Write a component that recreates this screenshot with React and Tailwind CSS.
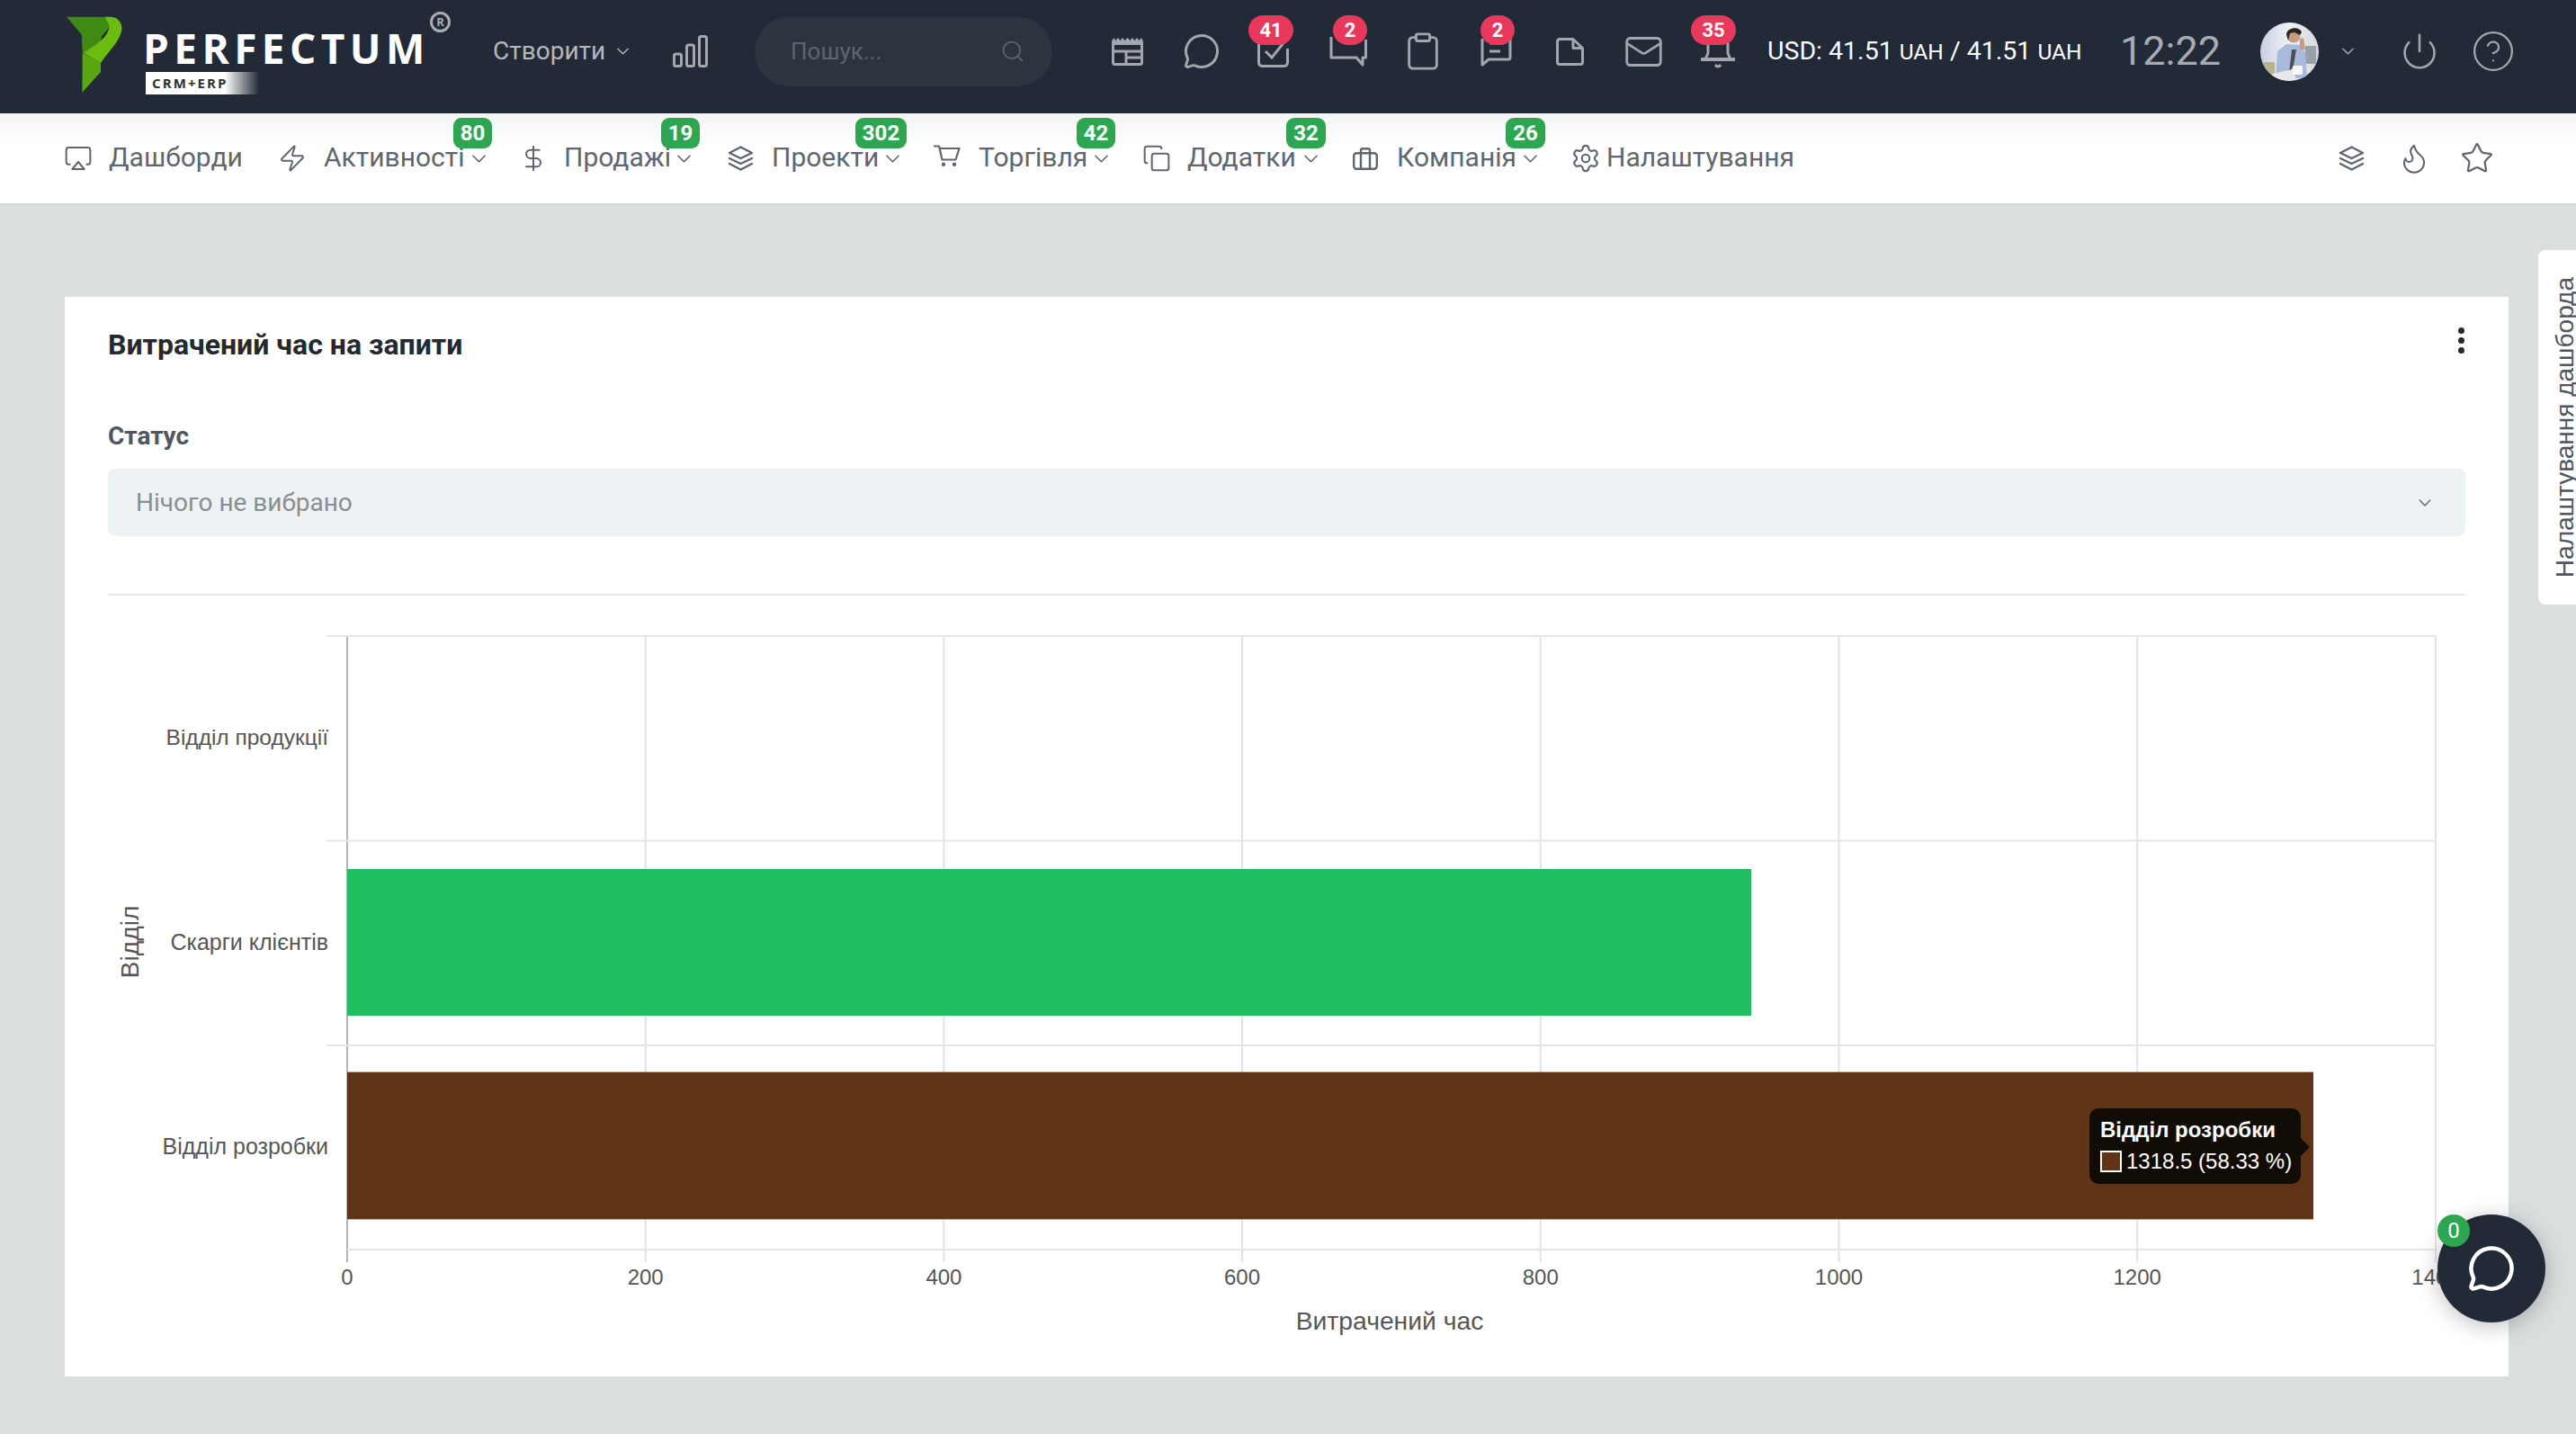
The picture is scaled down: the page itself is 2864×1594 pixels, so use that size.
import React from "react";
import { MessageCircle, Clipboard, Mail, Search, Airplay, Zap, DollarSign, Copy, Settings, Flame, Star, Power, CircleHelp } from "lucide-react";

const Chev = ({ w = 15, h = 9, c = "#5f6670", sw = 1.6 }) => (
  <svg width={w} height={h} viewBox="0 0 15 9" className="shrink-0" fill="none"><path d="M1 1.2 7.5 7.8 14 1.2" stroke={c} strokeWidth={sw} strokeLinecap="round" strokeLinejoin="round" /></svg>
);

const Logo = () => (
  <div className="relative w-[428px] h-[92px] shrink-0">
    <svg width="64" height="87" viewBox="70 50 190 262" className="absolute left-0 top-[6px]">
      <path d="M72 55H205L215 90 190 120 178 176 125 176 122 115Z" fill="#3f8a12" />
      <path d="M200 55H222C248 58 260 80 256 102 248 140 212 170 186 210L128 176C170 150 216 120 214 85Z" fill="#6cbb10" />
      <path d="M125 175 186 210 186 240 124 308Z" fill="#5aa512" />
    </svg>
    <div className="absolute left-[86px] top-[19px] text-white font-bold text-[46px] leading-[46px] tracking-[5.4px] whitespace-nowrap" style={{ fontFamily: "'Open Sans', sans-serif" }}>PERFECTUM</div>
    <div className="absolute left-[405px] top-[2px] w-[23px] h-[23px] rounded-full border-[3px] border-[#a9adb2] flex items-center justify-center text-[#a9adb2] text-[13px] font-bold" style={{ fontFamily: "'Open Sans', sans-serif" }}>R</div>
    <div className="absolute left-[89px] top-[69px] w-[126px] h-[25px] bg-gradient-to-r from-white from-70% to-transparent pl-[7px] text-[#2b2f36] text-[15px] leading-[25px] font-bold tracking-[2.1px]" style={{ fontFamily: "'Open Sans', sans-serif" }}>CRM+ERP</div>
  </div>
);

const G = "#a3a7ad";
const N = "#5f6670";

const Bars = () => (
  <svg width="39" height="36" viewBox="0 0 39 36" fill="none" stroke={G} strokeWidth="3" className="shrink-0">
    <rect x="1.5" y="21" width="8" height="13.5" rx="2" /><rect x="15.5" y="11" width="8" height="23.5" rx="2" /><rect x="29.5" y="1.5" width="8" height="33" rx="2" />
  </svg>
);
const TableI = () => (
  <svg width="35" height="31" viewBox="0 0 35 31" fill="none" className="shrink-0">
    <path d="M0 4 2 0 4.5 3 7 0 9.5 3 12 0 14.5 3 17.5 0 20.5 3 23 0 25.5 3 28 0 30.5 3 33 0 35 4V8H0Z" fill={G} />
    <path d="M1.5 8V27.5A2 2 0 0 0 3.5 29.5H31.5A2 2 0 0 0 33.5 27.5V8M1.5 15H33.5M16 15V29.5M16 22H33.5" stroke={G} strokeWidth="3" />
  </svg>
);
const CheckI = () => (
  <svg width="35" height="35" viewBox="0 0 35 35" fill="none" stroke={G} strokeWidth="3" className="shrink-0">
    <path d="M27 3H6A4 4 0 0 0 1.5 7V29A4 4 0 0 0 6 33.5H29A4 4 0 0 0 33.5 29V14" /><path d="M9 17 16 24 32 4" />
  </svg>
);
const CommentI = () => (
  <svg width="42" height="37" viewBox="0 0 42 37" fill="none" stroke={G} strokeWidth="3" className="shrink-0">
    <path d="M2 2V25H30L37 33V25H40.5V5" strokeLinejoin="round" />
  </svg>
);
const ListI = () => (
  <svg width="35" height="35" viewBox="0 0 35 35" fill="none" stroke={G} strokeWidth="3" className="shrink-0">
    <path d="M2 3V32L9 26H31A2 2 0 0 0 33 24V3" strokeLinejoin="round" /><path d="M10 8H26M10 17H22" />
  </svg>
);
const BellI = () => (
  <svg width="38" height="37" viewBox="0 0 38 37" fill="none" stroke={G} strokeWidth="3" className="shrink-0">
    <path d="M8 4V20L5 27M30 4V20L33 27" /><path d="M0 27H38" strokeWidth="4" strokeLinecap="round" /><path d="M16 33Q19 37 22 33" />
  </svg>
);
const FileI = () => (
  <svg width="31" height="31" viewBox="0 0 31 31" fill="none" stroke={G} strokeWidth="3" strokeLinejoin="round" className="shrink-0">
    <path d="M4 1.5H19L29.5 11.5V27A2.5 2.5 0 0 1 27 29.5H4A2.5 2.5 0 0 1 1.5 27V4A2.5 2.5 0 0 1 4 1.5Z" /><path d="M19 1.5V11.5H29.5" />
  </svg>
);
const Slot = ({ className, children, badge, badgeClass }) => (
  <div className={`relative shrink-0 flex items-center justify-center h-[40px] ${className}`}>
    {children}
    {badge && <span className={`absolute top-[-20px] h-[33px] rounded-full bg-[#e8385c] text-white text-[22px] font-bold flex items-center justify-center ${badgeClass}`}>{badge}</span>}
  </div>
);

const BriefI = () => (
  <svg width="28" height="25" viewBox="0 0 28 25" fill="none" stroke={N} strokeWidth="2.4" className="shrink-0">
    <rect x="1.2" y="6.2" width="25.6" height="17.6" rx="3" /><path d="M9 6V3A2 2 0 0 1 11 1.2H17A2 2 0 0 1 19 3V6M9 6V24M19 6V24" />
  </svg>
);
const LayersI = () => (
  <svg width="29" height="28" viewBox="0 0 29 28" fill="none" stroke={N} strokeWidth="2.4" strokeLinejoin="round" strokeLinecap="round" className="shrink-0">
    <path d="M14.5 1.5 27 8 14.5 14 2 8Z" /><path d="M2 14 14.5 20 27 14" /><path d="M2 20 14.5 26.5 27 20" />
  </svg>
);
const CartI = () => (
  <svg width="30" height="24" viewBox="0 0 30 24" fill="none" stroke={N} strokeWidth="2.2" strokeLinejoin="round" strokeLinecap="round" className="shrink-0 -mt-[7px]">
    <path d="M1 1.5H6L9.5 16.5H24.5L28.5 4H6.8" /><circle cx="11" cy="21.8" r="1.1" fill={N} /><circle cx="23" cy="21.8" r="1.1" fill={N} />
  </svg>
);

const I = (Comp, size, sw = 1.5) => <Comp size={size} strokeWidth={sw} color={N} className="shrink-0" />;

const nav = [
  { icon: I(Airplay, 32), text: "Дашборди", wrap: "", iw: "w-[27px]", tw: "ml-[21px] w-[148px]" },
  { icon: I(Zap, 32), text: "Активності", wrap: "ml-[43px]", iw: "w-[25px]", tw: "ml-[23px] w-[155px]", badge: "80", bc: "-right-[7px] w-[43px]" },
  { icon: I(DollarSign, 32), text: "Продажі", wrap: "ml-[43px]", iw: "w-[19px]", tw: "ml-[25px] w-[116px]", badge: "19", bc: "-right-[10px] w-[43px]" },
  { icon: <LayersI />, text: "Проекти", wrap: "ml-[41px]", iw: "w-[29px]", tw: "ml-[20px] w-[117px]", badge: "302", bc: "-right-[8px] w-[57px]" },
  { icon: <CartI />, text: "Торгівля", wrap: "ml-[38px]", iw: "w-[30px]", tw: "ml-[20px] w-[119px]", badge: "42", bc: "-right-[8px] w-[43px]" },
  { icon: I(Copy, 32), text: "Додатки", wrap: "ml-[40px]", iw: "w-[27px]", tw: "ml-[21px] w-[120px]", badge: "32", bc: "-right-[9px] w-[44px]" },
  { icon: <BriefI />, text: "Компанія", wrap: "ml-[39px]", iw: "w-[28px]", tw: "ml-[21px] w-[131px]", badge: "26", bc: "-right-[9px] w-[44px]" },
  { icon: I(Settings, 34), text: "Налаштування", wrap: "ml-[39px]", iw: "w-[30px]", tw: "ml-[8px] w-[207px]", last: true },
];

const gridX = [386, 717.7, 1049.4, 1381, 1712.8, 2044.5, 2376.2, 2708];
const gridY = [707, 934.5, 1162];
const labelsX = ["0", "200", "400", "600", "800", "1000", "1200", "1400"];

const Chart = () => (
  <svg width="2620" height="868" viewBox="120 662 2620 868" className="block" style={{ fontFamily: "'Liberation Sans', Arial, sans-serif" }}>
    {gridX.map((x, i) => (
      <line key={x} x1={x} x2={x} y1="706" y2="1403" stroke={i === 0 ? "#b4b4b4" : "#e3e3e3"} strokeWidth="2" />
    ))}
    {gridY.map((y) => (
      <line key={y} x1="363" x2="2708" y1={y} y2={y} stroke="#e5e5e5" strokeWidth="2" />
    ))}
    <line x1="386" x2="2708" y1="1389" y2="1389" stroke="#e5e5e5" strokeWidth="2" />
    <rect x="386" y="966" width="1561" height="163" fill="#20be5f" />
    <rect x="386" y="1192" width="2186" height="163" fill="#603417" />
    <rect x="386" y="1191" width="2186" height="1" fill="#603417" opacity=".35" />
    <rect x="386" y="1355" width="2186" height="1" fill="#603417" opacity=".35" />
    <g fill="#565656" fontSize="25" textAnchor="end">
      <text x="365" y="828" fontSize="24.5">Відділ продукції</text>
      <text x="365" y="1056">Скарги клієнтів</text>
      <text x="365" y="1283">Відділ розробки</text>
    </g>
    <g fill="#565656" fontSize="24" textAnchor="middle">
      {gridX.map((x, i) => <text key={x} x={x} y="1428">{labelsX[i]}</text>)}
    </g>
    <text x="1545" y="1478" fill="#565656" fontSize="28.3" textAnchor="middle">Витрачений час</text>
    <text transform="translate(154 1047) rotate(-90)" fill="#565656" fontSize="28.3" textAnchor="middle">Відділ</text>
  </svg>
);

const Avatar = () => (
  <svg width="65" height="65" viewBox="0 0 65 65" className="shrink-0 rounded-full">
    <defs><linearGradient id="av" x1="0" y1="0" x2="1" y2="0"><stop offset="0" stopColor="#c8cfe0" /><stop offset=".5" stopColor="#eef1f6" /><stop offset="1" stopColor="#d5d8dd" /></linearGradient></defs>
    <rect width="65" height="65" fill="url(#av)" />
    <rect x="2" y="44" width="14" height="14" fill="#b9b48f" />
    <rect x="50" y="26" width="12" height="20" fill="#9aa0a8" />
    <path d="M17 62 19 32 29 24 44 25 50 33 52 62Z" fill="#a9bbdc" />
    <path d="M35 30 40 30 37 48 32 56Z" fill="#4a4f58" />
    <circle cx="37" cy="15" r="7.5" fill="#c89c82" />
    <path d="M29 13C30 5 44 4 46 11L44 14 38 11 33 12 31 20Z" fill="#2b2420" />
    <path d="M44 18 48 17 50 30 44 30Z" fill="#c89c82" />
    <path d="M10 58 36 52 40 64 10 65Z" fill="#e8e8ea" />
    <rect x="36" y="48" width="11" height="10" rx="1" fill="#f7f7f7" />
  </svg>
);

export default function App() {
  return (
    <div className="relative w-[2864px] h-[1594px] overflow-hidden bg-[#dadedf] text-[#5f6670]" style={{ fontFamily: "Roboto, 'Noto Sans', sans-serif" }}>
      <header className="h-[126px] bg-[#212a36] flex items-center pb-[12px] pl-[73px]">
        <Logo />
        <div className="ml-[47px] w-[123px] shrink-0 text-[28px] text-[#b5b9be] whitespace-nowrap">Створити</div>
        <div className="ml-[15px]"><Chev w={13} h={8} c="#b5b9be" /></div>
        <div className="ml-[49px] flex"><Bars /></div>
        <div className="ml-[52px] w-[331px] h-[77px] rounded-full bg-[#2c3440] flex items-center justify-between pl-[40px] pr-[30px] shrink-0">
          <span className="text-[26px] text-[#5e6570]">Пошук...</span>
          <Search size={28} strokeWidth={1.5} color="#5e6570" className="shrink-0" />
        </div>
        <Slot className="ml-[66px] w-[35px]"><TableI /></Slot>
        <Slot className="ml-[47px] w-[35px]"><MessageCircle size={42} strokeWidth={1.7} color={G} className="shrink-0" /></Slot>
        <Slot className="ml-[45px] w-[35px]" badge="41" badgeClass="-left-[10px] w-[50px]"><CheckI /></Slot>
        <Slot className="ml-[45px] w-[42px]" badge="2" badgeClass="left-[4px] w-[38px]"><CommentI /></Slot>
        <Slot className="ml-[46px] w-[31px]"><Clipboard size={46} strokeWidth={1.5} color={G} className="shrink-0" /></Slot>
        <Slot className="ml-[49px] w-[35px]" badge="2" badgeClass="left-0 w-[38px]"><ListI /></Slot>
        <Slot className="ml-[49px] w-[31px]"><FileI /></Slot>
        <Slot className="ml-[47px] w-[38px]"><Mail size={45} strokeWidth={1.5} color={G} className="shrink-0" /></Slot>
        <Slot className="ml-[45px] w-[38px]" badge="35" badgeClass="-left-[11px] w-[50px]"><BellI /></Slot>
        <div className="ml-[36px] w-[351px] shrink-0 text-[28.5px] text-white whitespace-nowrap">USD: 41.51 <span className="text-[24.5px]">UAH</span> / 41.51 <span className="text-[24.5px]">UAH</span></div>
        <div className="ml-[41px] w-[111px] shrink-0 text-[45px] font-normal text-[#a7abb2] whitespace-nowrap">12:22</div>
        <div className="ml-[45px] flex"><Avatar /></div>
        <div className="ml-[26px]"><Chev w={13} h={8} c="#a7abb2" /></div>
        <Slot className="ml-[55px] w-[35px]"><Power size={44} strokeWidth={1.4} color={G} className="shrink-0" /></Slot>
        <Slot className="ml-[44px] w-[42px]"><CircleHelp size={50} strokeWidth={1.1} color={G} className="shrink-0" /></Slot>
      </header>

      <nav className="h-[100px] bg-gradient-to-b from-[#f3f4f6] to-white to-40% shadow-[0_1px_3px_rgba(0,0,0,0.08)] flex items-center pl-[73px] pr-[91px]">
        {nav.map((n) => (
          <div key={n.text} className={`relative flex items-center h-[40px] shrink-0 ${n.wrap}`}>
            <div className={`flex items-center justify-center shrink-0 ${n.iw}`}>{n.icon}</div>
            <span className={`text-[30px] pb-[3px] whitespace-nowrap ${n.tw}`}>{n.text}</span>
            {n.badge && <div className="ml-[10px]"><Chev /></div>}
            {n.badge && <span className={`absolute top-[-25px] h-[34px] rounded-[9px] bg-[#2ea651] text-white text-[24px] font-bold flex items-center justify-center ${n.bc}`}>{n.badge}</span>}
          </div>
        ))}
        <div className="ml-auto flex items-center">
          <LayersI />
          <Flame size={38} strokeWidth={1.3} color={N} className="ml-[36px] shrink-0" />
          <Star size={38} strokeWidth={1.4} color={N} className="ml-[32px] shrink-0" />
        </div>
      </nav>

      <main className="pt-[104px] pl-[72px] pr-[75px]">
        <section className="relative h-[1200px] bg-white px-[48px] pt-[36px]">
          <h2 className="h-[34px] leading-[34px] text-[32px] font-bold text-[#24292f]">Витрачений час на запити</h2>
          <div className="absolute right-[49px] top-[34px] flex flex-col gap-[4px]">
            <span className="w-[7px] h-[7px] rounded-full bg-[#24292f]" />
            <span className="w-[7px] h-[7px] rounded-full bg-[#24292f]" />
            <span className="w-[7px] h-[7px] rounded-full bg-[#24292f]" />
          </div>
          <div className="mt-[70px] h-[30px] leading-[30px] text-[28px] font-bold text-[#4f565e]">Статус</div>
          <div className="mt-[21px] h-[75px] rounded-[8px] bg-[#edf2f5] flex items-center justify-between pl-[31px] pr-[38px]">
            <span className="text-[28px] text-[#8a8e93]">Нічого не вибрано</span>
            <Chev w={14} h={8} c={N} />
          </div>
          <div className="mt-[64px] h-[2px] bg-[#e6e8ea]" />
          <div className="relative">
            <Chart />
            <div className="absolute left-[2203px] top-[570px] w-[235px] h-[84px] rounded-[10px] bg-[#120c06] text-white pl-[12px] pt-[10px]" style={{ fontFamily: "'Liberation Sans', Arial, sans-serif" }}>
              <div className="text-[24px] leading-[28px] font-bold whitespace-nowrap">Відділ розробки</div>
              <div className="flex items-center mt-[7px] text-[24px] leading-[28px] whitespace-nowrap">
                <span className="w-[24px] h-[24px] border-2 border-white bg-[#603417] shrink-0" />
                <span className="ml-[5px]">1318.5 (58.33 %)</span>
              </div>
              <span className="absolute left-[235px] top-[33px] w-0 h-0 border-y-[10px] border-y-transparent border-l-[10px] border-l-[#120c06]" />
            </div>
          </div>
        </section>
      </main>

      <div className="absolute right-0 top-[278px] w-[42px] h-[394px] bg-white rounded-l-[8px] flex items-center justify-start pl-[19px]">
        <span className="block whitespace-nowrap text-[28px] leading-[22px] text-[#4f565e] [writing-mode:vertical-rl] rotate-180" style={{ fontFamily: "'Liberation Sans', Arial, sans-serif" }}>Налаштування дашборда</span>
      </div>

      <div className="absolute left-[2710px] top-[1350px] w-[120px] h-[120px] rounded-full bg-[#212a36] shadow-[0_4px_24px_rgba(0,0,0,0.25)] flex items-center justify-center">
        <MessageCircle size={54} strokeWidth={2} color="white" className="shrink-0" />
        <span className="absolute left-0 top-0 w-[36px] h-[36px] rounded-full bg-[#2ea651] text-white text-[24px] flex items-center justify-center">0</span>
      </div>
    </div>
  );
}
